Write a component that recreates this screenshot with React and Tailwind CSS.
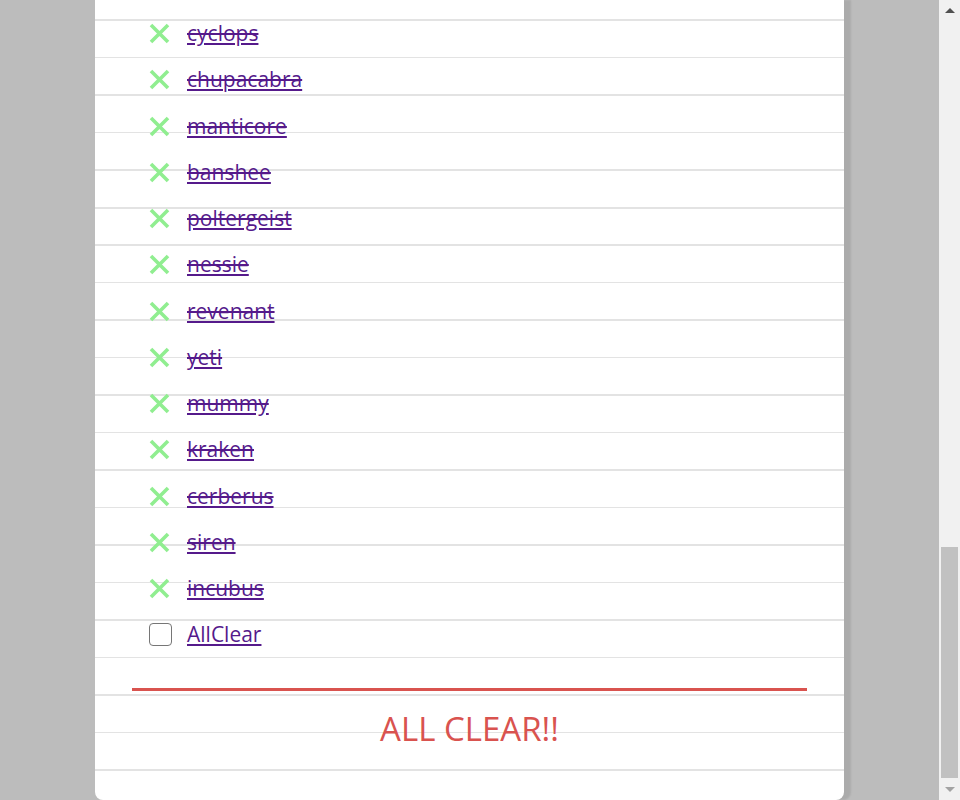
import React from "react";

const monsters = [
  "cyclops",
  "chupacabra",
  "manticore",
  "banshee",
  "poltergeist",
  "nessie",
  "revenant",
  "yeti",
  "mummy",
  "kraken",
  "cerberus",
  "siren",
  "incubus",
];

function Cross() {
  return (
    <svg width="21" height="21" viewBox="0 0 21 21" className="shrink-0">
      <path d="M2 2 L19 19 M19 2 L2 19" stroke="#90ee90" strokeWidth="3.6" />
    </svg>
  );
}

function Row({ children, icon }) {
  return (
    <li className="h-[46.25px] flex items-center pl-[54px]">
      <div className="w-[24px] flex items-center justify-start">{icon}</div>
      <a href="#" className="ml-[14px] text-[#551a8b] underline">
        {children}
      </a>
    </li>
  );
}

/* fake classic scrollbar, page is shown scrolled to the bottom */
function Scrollbar() {
  return (
    <div className="w-[21px] h-full bg-[#f1f1f1] flex flex-col items-center">
      <div className="h-[20px] w-full flex items-center justify-center">
        <div className="w-0 h-0 border-l-[5px] border-r-[5px] border-b-[5px] border-l-transparent border-r-transparent border-b-[#505050]" />
      </div>
      <div className="flex-1 w-full flex flex-col justify-end px-[2px]">
        <div className="h-[231px] w-full bg-[#c1c1c1]" />
      </div>
      <div className="h-[22px] w-full flex items-center justify-center">
        <div className="w-0 h-0 border-l-[5px] border-r-[5px] border-t-[5px] border-l-transparent border-r-transparent border-t-[#a3a3a3]" />
      </div>
    </div>
  );
}

export default function App() {
  return (
    <div className="h-[800px] w-[960px] flex overflow-hidden bg-[#bcbcbc]" style={{ fontFamily: "'Open Sans', 'Noto Sans', sans-serif" }}>
      <div className="flex-1 flex justify-center">
        <div className="w-[749px] h-[800px] bg-white rounded-b-lg shadow-[7px_0_2px_rgba(0,0,0,0.09)] bg-[repeating-linear-gradient(to_bottom,transparent_0,transparent_19.5px,#e3e3e3_19.5px,#e3e3e3_21px,transparent_21px,transparent_37.5px)] flex flex-col">
          <ul className="pt-[10.5px] text-[21px] leading-none">
            {monsters.map((m) => (
              <Row key={m} icon={<Cross />}>
                <span className="line-through decoration-[#551a8b]">{m}</span>
              </Row>
            ))}
            <Row icon={<span className="block w-[23px] h-[23px] rounded-[4px] border border-[#767676] bg-white" />}>
              AllClear
            </Row>
          </ul>
          <div className="mt-[30px] mx-[37px] h-[3px] bg-[#d9534f]" />
          <div className="mt-[14px] text-center text-[33px] leading-[48px] font-normal text-[#d9534f]">ALL CLEAR!!</div>
        </div>
      </div>
      <Scrollbar />
    </div>
  );
}
